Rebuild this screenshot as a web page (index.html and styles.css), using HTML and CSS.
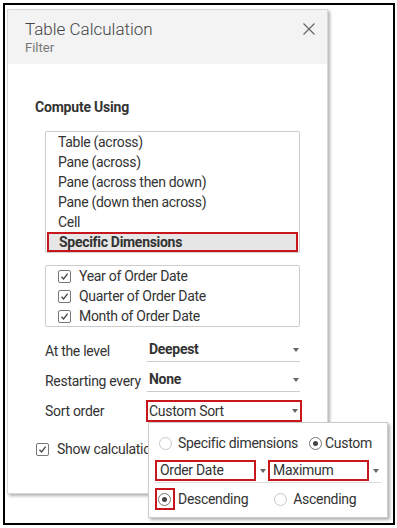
FILE: index.html
```html
<!DOCTYPE html>
<html>
<head>
<meta charset="utf-8">
<link rel="stylesheet" href="styles.css">
</head>
<body>
<div class="frame">
  <div class="dialog">
    <div class="header">
      <div class="title">Table Calculation</div>
      <div class="subtitle">Filter</div>
      <svg class="close" width="12" height="12" viewBox="0 0 12 12"><path d="M0.5 0.5 L11.5 11.5 M11.5 0.5 L0.5 11.5" stroke="#666" stroke-width="1.2" fill="none"/></svg>
    </div>
    <div class="body">
      <div class="section-title">Compute Using</div>
      <div class="listbox">
        <div class="item">Table (across)</div>
        <div class="item">Pane (across)</div>
        <div class="item">Pane (across then down)</div>
        <div class="item">Pane (down then across)</div>
        <div class="item">Cell</div>
        <div class="item selected">Specific Dimensions</div>
      </div>
      <div class="checkbox-list">
        <div class="check-row"><span class="checkbox"><svg width="11" height="11" viewBox="0 0 11 11"><path d="M2.5 5.8 L4.6 8 L8.6 2.6" stroke="#444" stroke-width="1.3" fill="none"/></svg></span>Year of Order Date</div>
        <div class="check-row"><span class="checkbox"><svg width="11" height="11" viewBox="0 0 11 11"><path d="M2.5 5.8 L4.6 8 L8.6 2.6" stroke="#444" stroke-width="1.3" fill="none"/></svg></span>Quarter of Order Date</div>
        <div class="check-row"><span class="checkbox"><svg width="11" height="11" viewBox="0 0 11 11"><path d="M2.5 5.8 L4.6 8 L8.6 2.6" stroke="#444" stroke-width="1.3" fill="none"/></svg></span>Month of Order Date</div>
      </div>
      <div class="field first">
        <div class="label">At the level</div>
        <div class="value"><b>Deepest</b><span class="arrow"></span></div>
      </div>
      <div class="field">
        <div class="label">Restarting every</div>
        <div class="value"><b>None</b><span class="arrow"></span></div>
      </div>
      <div class="field">
        <div class="label">Sort order</div>
        <div class="value red">Custom Sort<span class="arrow"></span></div>
      </div>
      <div class="show-row"><span class="checkbox"><svg width="11" height="11" viewBox="0 0 11 11"><path d="M2.5 5.8 L4.6 8 L8.6 2.6" stroke="#444" stroke-width="1.3" fill="none"/></svg></span><span class="show-text">Show calculation assistance</span></div>
    </div>
  </div>
  <div class="popup">
    <div class="prow">
      <span class="opt"><span class="radio"></span>Specific dimensions</span>
      <span class="opt custom"><span class="radio on"></span>Custom</span>
    </div>
    <div class="prow selects">
      <span class="sel"><span class="selbox">Order Date</span><span class="arrow small"></span></span>
      <span class="sel"><span class="selbox">Maximum</span><span class="arrow small"></span></span>
    </div>
    <div class="prow">
      <span class="opt"><span class="radiowrap"><span class="radio on"></span></span>Descending</span>
      <span class="opt asc"><span class="radio"></span>Ascending</span>
    </div>
  </div>
</div>
</body>
</html>
```
FILE: styles.css
```css
* { box-sizing: border-box; }
html, body { margin: 0; padding: 0; background: #fff; }
body { font-family: Roboto, "Liberation Sans", sans-serif; color: #333; font-size: 14px; letter-spacing: -0.3px; }
.frame {
  position: relative;
  margin: 3px;
  width: 392px;
  height: 522px;
  border: 2px solid #000;
  padding: 4px 0 0 2px;
  overflow: hidden;
}
.dialog {
  width: 321px;
  height: 485px;
  background: #fff;
  border: 1px solid #d8d8d8;
  box-shadow: 2px 2px 3px rgba(0,0,0,0.3);
}
.header {
  position: relative;
  background: #f3f3f3;
  height: 54px;
  padding: 9px 0 0 17px;
}
.title { font-size: 17px; line-height: 20px; color: #444; font-weight: 300; letter-spacing: 0; }
.subtitle { font-size: 13px; line-height: 16px; color: #777; margin-top: 1px; letter-spacing: 0; }
.close { position: absolute; right: 12px; top: 13px; }
.body { padding: 0 27px 0 27px; }
.section-title { font-weight: bold; font-size: 14px; line-height: 20px; margin-top: 33px; color: #333; letter-spacing: -0.2px; }
.listbox {
  margin: 14px 0 0 10px;
  border: 1px solid #ccc;
  border-radius: 2px;
}
.item { height: 20px; line-height: 20px; padding-left: 12px; }
.item.selected {
  font-weight: bold;
  background: #e6e6e6;
  border: 2px solid #c8161d;
  margin: 0 1px;
  padding-left: 10px;
  line-height: 16px;
}
.checkbox-list {
  margin: 12px 0 0 10px;
  border: 1px solid #ccc;
  border-radius: 2px;
}
.check-row { display: flex; align-items: center; height: 20px; padding-left: 12px; }
.checkbox {
  display: inline-flex;
  flex: none;
  align-items: center;
  justify-content: center;
  width: 13px;
  height: 13px;
  border: 1px solid #777;
  border-radius: 2px;
  margin-right: 8px;
}
.field { display: flex; align-items: flex-end; margin: 6px 0 0 10px; height: 24px; }
.field.first { margin-top: 11px; }
.label { width: 102px; line-height: 22px; white-space: nowrap; }
.value {
  position: relative;
  flex: 1;
  height: 24px;
  line-height: 22px;
  padding-left: 2px;
  border-bottom: 1px solid #ccc;
}
.value.red {
  border: 2px solid #c8161d;
  height: 22px;
  line-height: 18px;
  margin: 0 -2px 0 -1px;
  padding-left: 1px;
}
.arrow {
  position: absolute;
  right: 1px;
  top: 10px;
  width: 0; height: 0;
  border-left: 3.5px solid transparent;
  border-right: 3.5px solid transparent;
  border-top: 4px solid #666;
}
.value.red .arrow { top: 7px; right: 2px; }
.show-row { display: flex; align-items: center; margin: 17px 0 0 1px; height: 20px; white-space: nowrap; }
.show-text { display: block; width: 91px; overflow: hidden; }
.popup {
  position: absolute;
  left: 143px;
  top: 417px;
  width: 240px;
  height: 96px;
  background: #fff;
  border: 1px solid #ccc;
  box-shadow: 2px 2px 3px rgba(0,0,0,0.3);
  padding: 6px 0 0 6px;
}
.prow { display: flex; align-items: center; height: 28px; }
.opt { display: flex; align-items: center; }
.radio {
  display: inline-block;
  flex: none;
  width: 13px;
  height: 13px;
  border: 1px solid #c8c8c8;
  border-radius: 50%;
  margin: 0 6px 0 4px;
  position: relative;
}
.radio.on { border-color: #777; }
.radio.on::after {
  content: "";
  position: absolute;
  left: 3px; top: 3px;
  width: 5px; height: 5px;
  border-radius: 50%;
  background: #444;
}
.custom { margin-left: 11px; }
.custom .radio { margin-left: 0; margin-right: 3px; }
.asc { margin-left: 22px; }
.radiowrap {
  display: inline-flex;
  align-items: center;
  width: 20px;
  height: 22px;
  border: 2px solid #c8161d;
  margin-right: 3px;
}
.radiowrap .radio { margin: 0 0 0 1px; }
.selects { align-items: flex-start; height: 28px; padding-top: 3px; }
.sel {
  position: relative;
  display: flex;
  width: 113px;
  padding-right: 12px;
  height: 23px;
  border-bottom: 1px solid #ddd;
}
.selbox {
  flex: 1;
  border: 2px solid #c8161d;
  height: 21px;
  line-height: 17px;
  padding-left: 3px;
}
.arrow.small { right: 2px; top: 9px; }
```
